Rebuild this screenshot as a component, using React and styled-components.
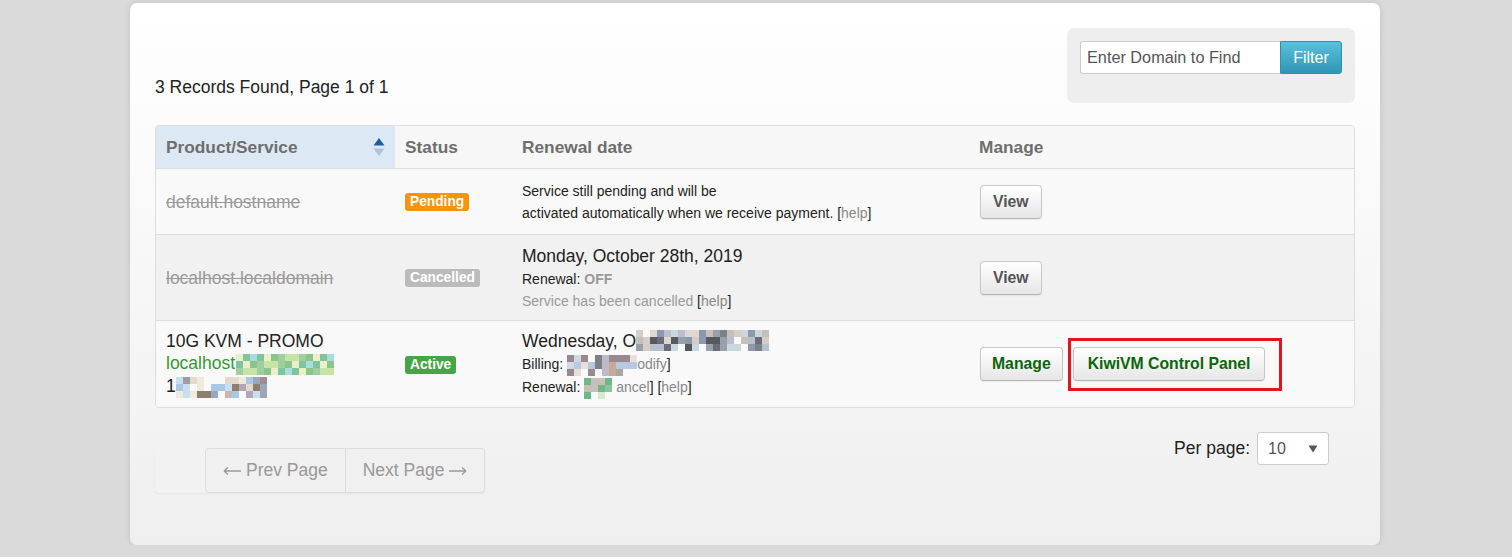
import styled, { createGlobalStyle } from "styled-components";

const GlobalStyle = createGlobalStyle`
  body {
    margin: 0;
    background: #dadada;
    font-family: "Liberation Sans", Arial, sans-serif;
    color: #222;
  }
`;

const Panel = styled.div`
  width: 1250px;
  box-sizing: border-box;
  margin: 3px 0 0 130px;
  padding: 25px 25px 52px;
  background: linear-gradient(#ffffff, #efefef);
  border-radius: 7px;
  box-shadow: 0 0 6px rgba(0, 0, 0, 0.12);
`;

const TopBar = styled.div`
  display: flex;
  justify-content: space-between;
  align-items: flex-end;
`;

const RecordsInfo = styled.div`
  font-size: 17.5px;
  line-height: 20px;
  margin-bottom: 6px;
`;

const FilterBox = styled.div`
  width: 288px;
  height: 75px;
  box-sizing: border-box;
  padding: 13px 13px 0;
  background: #eeeeee;
  border-radius: 7px;
  display: flex;
  align-items: flex-start;
`;

const SearchInput = styled.div`
  width: 200px;
  height: 33px;
  box-sizing: border-box;
  padding: 0 6px;
  background: #fff;
  border: 1px solid #ccc;
  border-right: none;
  border-radius: 3px 0 0 3px;
  font-size: 16.25px;
  line-height: 31px;
  color: #555;
`;

const FilterButton = styled.button`
  width: 62px;
  height: 33px;
  border: 1px solid #2f8fae;
  border-radius: 0 3px 3px 0;
  background: linear-gradient(#5bc0de, #2f96b4);
  color: #fff;
  font-family: inherit;
  font-size: 16px;
`;

const TableFrame = styled.div`
  margin-top: 22px;
  border: 1px solid #dddddd;
  border-radius: 4px;
  overflow: hidden;
`;

const Table = styled.table`
  width: 100%;
  border-collapse: separate;
  border-spacing: 0;
  table-layout: fixed;
`;

const Th = styled.th`
  width: ${(p) => p.$w || "auto"};
  height: 42px;
  padding: 0 10px;
  text-align: left;
  font-size: 17.3px;
  font-weight: bold;
  color: #6e6e6e;
  background: ${(p) => (p.$sorted ? "#dce9f4" : "#f7f7f7")};
`;

const HeadInner = styled.div`
  display: flex;
  justify-content: space-between;
  align-items: center;
`;

const Row = styled.tr`
  height: ${(p) => p.$h}px;
  background: ${(p) => (p.$striped ? "#f1f1f1" : "#f9f9f9")};
`;

const Td = styled.td`
  border-top: 1px solid #dddddd;
  padding: 0 10px 0 ${(p) => (p.$manage ? 11 : 10)}px;
  vertical-align: middle;
`;

const ProductName = styled.div`
  font-size: 17.5px;
  line-height: 22px;
  color: ${(p) => (p.$muted ? "#9a9a9a" : p.$link ? "#339933" : "#222")};
  text-decoration: ${(p) => (p.$muted ? "line-through" : "none")};
  white-space: nowrap;
`;

const Badge = styled.span`
  display: inline-block;
  padding: 0 5px;
  height: 18px;
  line-height: 18px;
  border-radius: 3px;
  font-size: 13.75px;
  font-weight: bold;
  color: #fff;
  background: ${(p) => p.$bg};
`;

const DateLine = styled.div`
  font-size: 17.5px;
  line-height: 24px;
  white-space: nowrap;
`;

const SmallLine = styled.div`
  font-size: 14px;
  line-height: 22px;
  color: ${(p) => (p.$muted ? "#999" : "#222")};
  white-space: nowrap;
`;

const Strong = styled.b`
  color: #999;
`;

const HelpLink = styled.span`
  color: #888;
`;

const Bracket = styled.span`
  color: #222;
`;

const Actions = styled.div`
  display: flex;
  align-items: center;
  gap: 10px;
`;

const Button = styled.button`
  height: 34px;
  padding: 0 ${(p) => (p.$wide ? 14 : p.$tight ? 11 : 12)}px;
  border: 1px solid #c8c8c8;
  border-bottom-color: #b3b3b3;
  border-radius: 4px;
  background: linear-gradient(#ffffff, #e6e6e6);
  box-shadow: 0 1px 2px rgba(0, 0, 0, 0.06);
  font-family: inherit;
  font-size: 15.75px;
  font-weight: bold;
  color: ${(p) => (p.$green ? "#0a660a" : "#555")};
`;

const Highlight = styled.span`
  display: inline-flex;
  margin-left: -5px;
  padding: 6px 14px 7px 2px;
  border: 3px solid #e3141e;
`;

const Footer = styled.div`
  margin-top: 24px;
  display: flex;
  justify-content: space-between;
  align-items: flex-start;
`;

const Pager = styled.div`
  margin-top: 16px;
  display: flex;
  padding-left: 50px;
  border-radius: 4px;
  box-shadow: 0 1px 2px rgba(0, 0, 0, 0.05);
  background: #f2f2f2;
`;

const PageButton = styled.span`
  height: 45px;
  box-sizing: border-box;
  padding: 0 17px;
  display: flex;
  align-items: center;
  gap: 5px;
  border: 1px solid #dddddd;
  border-left-width: ${(p) => (p.$first ? "1px" : "0")};
  border-radius: ${(p) => (p.$first ? "4px 0 0 4px" : "0 4px 4px 0")};
  background: #f0f0f0;
  color: #999;
  font-size: 17.5px;
`;

const PerPage = styled.div`
  display: flex;
  align-items: center;
  gap: 7px;
  margin-right: 26px;
  font-size: 17.5px;
`;

const Select = styled.div`
  width: 72px;
  height: 33px;
  box-sizing: border-box;
  padding: 0 10px;
  display: flex;
  align-items: center;
  justify-content: space-between;
  background: #fff;
  border: 1px solid #ccc;
  border-radius: 3px;
  font-size: 16px;
  color: #555;
`;

const MosaicGrid = styled.span`
  display: inline-grid;
  grid-template-columns: repeat(${(p) => p.$cols}, 7px);
  grid-auto-rows: 7px;
  vertical-align: middle;
  margin: ${(p) => p.$m || "0"};
`;

const Cell = styled.span`
  background: ${(p) => p.$c};
`;

function Mosaic({ cols, rows, colors, seed = 1, m }) {
  const cells = [];
  for (let i = 0; i < cols * rows; i++) {
    const k = (i * 7 + seed * 5 + ((i * i + seed) % 11)) % colors.length;
    cells.push(<Cell key={i} $c={colors[k]} />);
  }
  return (
    <MosaicGrid $cols={cols} $m={m}>
      {cells}
    </MosaicGrid>
  );
}

const greens = ["#b9dcb0", "#8cc48c", "transparent", "#a7dde0", "#7fc49a", "#d7e8c8", "#c7e3a5", "#e9efc9", "#9fcf9f", "#6fb88a", "transparent"];
const browns = ["#c9dff0", "#a08c8c", "transparent", "#c4b8b0", "#8e7e6e", "#9aa7b8", "#e5d8cf", "#f1eadc", "#9e9e9e", "transparent", "#b0a8b8", "#a8c8e6"];
const grays = ["#d8ccc8", "#7c8088", "#c8d8dc", "transparent", "#555a60", "#98a0a8", "#e0d8d0", "#8c98b0", "transparent", "#b8c0d0", "#6c6c78", "#c6c0bc"];
const billing = ["#7c8088", "#c8a898", "#d0d8e8", "#9a8890", "transparent", "#c0b8c8", "#a8a8a0", "#e8e0d8", "#b8c8e0"];
const renewal = ["#8cc49a", "#6fb88a", "#d8e8d0", "transparent", "#c8c0b8"];

function SortIcon() {
  return (
    <svg width="12" height="20" viewBox="0 0 12 20">
      <path d="M6 1 L11.5 8.5 H0.5 Z" fill="#1f5c9e" />
      <path d="M6 19 L11.5 11.5 H0.5 Z" fill="#a9c3dd" />
    </svg>
  );
}

function Arrow({ dir }) {
  const d = dir === "left" ? "M1 6 H18 M1 6 L5 2.5 M1 6 L5 9.5" : "M0 6 H17 M17 6 L13 2.5 M17 6 L13 9.5";
  return (
    <svg width="18" height="12" viewBox="0 0 18 12">
      <path d={d} stroke="#999" strokeWidth="1.3" fill="none" />
    </svg>
  );
}

function Caret() {
  return (
    <svg width="10" height="8" viewBox="0 0 10 8">
      <path d="M0.5 0.5 H9.5 L5 7.5 Z" fill="#555" />
    </svg>
  );
}

function Help() {
  return (
    <>
      <Bracket>[</Bracket>
      <HelpLink>help</HelpLink>
      <Bracket>]</Bracket>
    </>
  );
}

export default function App() {
  return (
    <>
      <GlobalStyle />
      <Panel>
        <TopBar>
          <RecordsInfo>3 Records Found, Page 1 of 1</RecordsInfo>
          <FilterBox>
            <SearchInput>Enter Domain to Find</SearchInput>
            <FilterButton>Filter</FilterButton>
          </FilterBox>
        </TopBar>

        <TableFrame>
          <Table>
            <thead>
              <tr>
                <Th $w="219px" $sorted>
                  <HeadInner>
                    Product/Service
                    <SortIcon />
                  </HeadInner>
                </Th>
                <Th $w="97px">Status</Th>
                <Th $w="437px">Renewal date</Th>
                <Th>Manage</Th>
              </tr>
            </thead>
            <tbody>
              <Row $h={66}>
                <Td>
                  <ProductName $muted>default.hostname</ProductName>
                </Td>
                <Td>
                  <Badge $bg="#f89406">Pending</Badge>
                </Td>
                <Td>
                  <SmallLine>Service still pending and will be</SmallLine>
                  <SmallLine>
                    activated automatically when we receive payment. <Help />
                  </SmallLine>
                </Td>
                <Td $manage>
                  <Button>View</Button>
                </Td>
              </Row>
              <Row $h={86} $striped>
                <Td>
                  <ProductName $muted>localhost.localdomain</ProductName>
                </Td>
                <Td>
                  <Badge $bg="#bbbbbb">Cancelled</Badge>
                </Td>
                <Td>
                  <DateLine>Monday, October 28th, 2019</DateLine>
                  <SmallLine>
                    Renewal: <Strong>OFF</Strong>
                  </SmallLine>
                  <SmallLine $muted>
                    Service has been cancelled <Help />
                  </SmallLine>
                </Td>
                <Td $manage>
                  <Button>View</Button>
                </Td>
              </Row>
              <Row $h={87}>
                <Td>
                  <ProductName>10G KVM - PROMO</ProductName>
                  <ProductName $link>
                    localhost
                    <Mosaic cols={14} rows={3} colors={greens} seed={3} m="0 0 0 1px" />
                  </ProductName>
                  <ProductName>
                    1
                    <Mosaic cols={13} rows={3} colors={browns} seed={2} />
                  </ProductName>
                </Td>
                <Td>
                  <Badge $bg="#46a546">Active</Badge>
                </Td>
                <Td>
                  <DateLine>
                    Wednesday, O
                    <Mosaic cols={19} rows={3} colors={grays} seed={4} m="-4px 0 0 0" />
                  </DateLine>
                  <SmallLine>
                    Billing: <Mosaic cols={10} rows={3} colors={billing} seed={5} />
                    <HelpLink>odify</HelpLink>
                    <Bracket>]</Bracket>
                  </SmallLine>
                  <SmallLine>
                    Renewal: <Mosaic cols={4} rows={3} colors={renewal} seed={1} />
                    <HelpLink> ancel</HelpLink>
                    <Bracket>]</Bracket> <Help />
                  </SmallLine>
                </Td>
                <Td $manage>
                  <Actions>
                    <Button $green $tight>Manage</Button>
                    <Highlight>
                      <Button $green $wide>KiwiVM Control Panel</Button>
                    </Highlight>
                  </Actions>
                </Td>
              </Row>
            </tbody>
          </Table>
        </TableFrame>

        <Footer>
          <Pager>
            <PageButton $first>
              <Arrow dir="left" />
              Prev Page
            </PageButton>
            <PageButton>
              Next Page
              <Arrow dir="right" />
            </PageButton>
          </Pager>
          <PerPage>
            Per page:
            <Select>
              10
              <Caret />
            </Select>
          </PerPage>
        </Footer>
      </Panel>
    </>
  );
}
